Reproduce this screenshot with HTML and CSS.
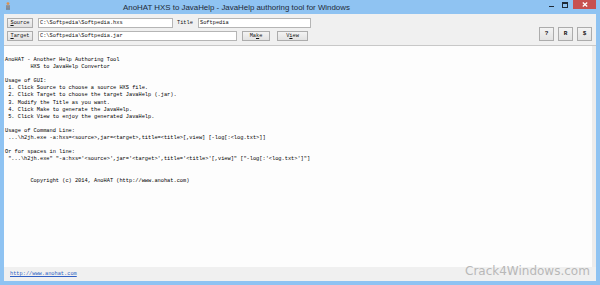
FILE: index.html
```html
<!DOCTYPE html>
<html lang="en">
<head>
    <meta charset="UTF-8">
    <title>AnoHAT HXS to JavaHelp</title>
    <link rel="stylesheet" href="styles.css">
</head>
<body>
    <div class="window">
        <!-- Title bar -->
        <div class="titlebar">
            <svg class="app-icon" width="6" height="8" viewBox="0 0 6 8">
                <circle cx="3" cy="1.6" r="1.4" fill="#e0904a"/>
                <rect x="1" y="3.2" width="4" height="3" fill="#8a8f99"/>
                <rect x="1.4" y="6" width="1.2" height="2" fill="#6b7079"/>
                <rect x="3.4" y="6" width="1.2" height="2" fill="#6b7079"/>
            </svg>
            <span class="title">AnoHAT HXS to JavaHelp - JavaHelp authoring tool for Windows</span>
            <div class="controls">
                <span class="ctl-min"></span>
                <span class="ctl-max"></span>
                <span class="ctl-close">
                    <svg width="6" height="5" viewBox="0 0 6 5">
                        <path d="M0.8 0.6 L5.2 4.4 M5.2 0.6 L0.8 4.4" stroke="#fff" stroke-width="1.3"/>
                    </svg>
                </span>
            </div>
        </div>

        <div class="client">
            <div class="toolbar">
                <div class="rows">
                    <div class="row">
                        <button class="btn btn-wide"><u>S</u>ource</button>
                        <div class="field field-source">C:\Softpedia\Softpedia.hxs</div>
                        <span class="label">Title</span>
                        <div class="field field-title">Softpedia</div>
                    </div>
                    <div class="row">
                        <button class="btn btn-wide"><u>T</u>arget</button>
                        <div class="field field-target">C:\Softpedia\Softpedia.jar</div>
                        <button class="btn btn-make">Ma<u>k</u>e</button>
                        <button class="btn btn-view">V<u>i</u>ew</button>
                    </div>
                </div>
                <div class="tools">
                    <button class="btn btn-tool">?</button>
                    <button class="btn btn-tool">R</button>
                    <button class="btn btn-tool">$</button>
                </div>
            </div>

<pre class="output">AnoHAT - Another Help Authoring Tool
        HXS to JavaHelp Convertor

Usage of GUI:
 1. Click Source to choose a source HXS file.
 2. Click Target to choose the target JavaHelp (.jar).
 3. Modify the Title as you want.
 4. Click Make to generate the JavaHelp.
 5. Click View to enjoy the generated JavaHelp.

Usage of Command Line:
 ...\h2jh.exe -a:hxs=&lt;source&gt;,jar=&lt;target&gt;,title=&lt;title&gt;[,view] [-log[:&lt;log.txt&gt;]]

Or for spaces in line:
 "...\h2jh.exe" "-a:hxs='&lt;source&gt;',jar='&lt;target&gt;',title='&lt;title&gt;'[,view]" ["-log[:'&lt;log.txt&gt;']"]


        Copyright (c) 2014, AnoHAT (http://www.anohat.com)</pre>

            <div class="statusbar">
                <a class="home-link" href="#">http://www.anohat.com</a>
            </div>
        </div>
    </div>

    <!-- Watermark stamped over the screenshot -->
    <div class="watermark">Crack4Windows.com</div>
</body>
</html>
```

FILE: styles.css
```css
body {
    margin: 0;
    width: 600px;
    height: 285px;
    overflow: hidden;
    position: relative;
    font-family: 'Liberation Mono', 'DejaVu Sans Mono', monospace;
}
.window {
    width: 600px;
    height: 285px;
    background-color: #8fc3f2;
    display: flex;
    flex-direction: column;
}

/* Title bar */
.titlebar {
    height: 14px;
    display: flex;
    align-items: center;
    flex-shrink: 0;
}
.app-icon {
    margin-left: 5px;
    margin-bottom: 2px;
}
.title {
    margin-left: 112px;
    font-family: 'Liberation Sans', Arial, sans-serif;
    font-size: 7.9px;
    color: #1e2a38;
    white-space: nowrap;
}
.controls {
    margin-left: auto;
    margin-right: 4px;
    align-self: flex-start;
    display: flex;
    align-items: flex-start;
}
.ctl-min {
    width: 5px;
    height: 1px;
    background-color: #1e2a38;
    margin-top: 6px;
}
.ctl-max {
    width: 4px;
    height: 3px;
    border: 1px solid #1e2a38;
    border-top-width: 2px;
    margin: 2px 0 0 8px;
}
.ctl-close {
    width: 23px;
    height: 9px;
    margin-left: 5px;
    background-color: #c75050;
    display: flex;
    align-items: center;
    justify-content: center;
}

/* Client area */
.client {
    flex: 1;
    margin: 0 4px 4px 4px;
    display: flex;
    flex-direction: column;
    background-color: #f0f0f0;
}
.toolbar {
    height: 32px;
    box-sizing: border-box;
    padding: 5px 4px 4px 3px;
    border-bottom: 1px solid #c8c8c8;
    display: flex;
    align-items: flex-end;
    flex-shrink: 0;
}
.rows {
    display: flex;
    flex-direction: column;
    gap: 3px;
}
.row {
    display: flex;
    align-items: center;
    height: 10px;
}
.btn {
    font-family: inherit;
    font-size: 5.3px;
    color: #111;
    height: 10px;
    padding: 0;
    margin: 0;
    border: 1px solid #acacac;
    background: linear-gradient(#f3f3f3, #e2e2e2);
    line-height: 8px;
    text-align: center;
    cursor: pointer;
}
.btn-wide {
    width: 26px;
}
.btn-make {
    width: 28px;
    margin-left: 5px;
}
.btn-view {
    width: 31px;
    margin-left: 7px;
}
.btn-tool {
    width: 15px;
    height: 14px;
    font-weight: bold;
    font-size: 6px;
}
.field {
    height: 10px;
    box-sizing: border-box;
    margin-left: 5px;
    padding: 0 0 0 1px;
    background-color: #fff;
    border: 1px solid #b5b5b5;
    font-size: 5.3px;
    line-height: 8px;
    color: #111;
    white-space: nowrap;
}
.field-source {
    width: 135px;
}
.field-target {
    width: 199px;
}
.field-title {
    width: 113px;
}
.label {
    font-size: 5.3px;
    color: #111;
    margin-left: 4px;
    width: 16px;
}
.tools {
    margin-left: auto;
    display: flex;
    gap: 4px;
}

/* Output text */
.output {
    flex: 1;
    margin: 0;
    padding: 11px 0 0 1px;
    background-color: #fdfdfd;
    border-right: 4px solid #ececec;
    font-family: inherit;
    font-size: 5.3px;
    line-height: 7.1px;
    color: #000;
    overflow: hidden;
}

/* Status bar */
.statusbar {
    height: 14px;
    display: flex;
    align-items: center;
    padding-left: 6px;
    flex-shrink: 0;
}
.home-link {
    font-size: 5.3px;
    color: #2f5fc4;
    text-decoration: underline;
}

.watermark {
    position: absolute;
    left: 465px;
    top: 265px;
    font-family: 'DejaVu Sans', sans-serif;
    font-size: 12px;
    line-height: 12px;
    color: #b8b8b8;
    white-space: nowrap;
}
```
